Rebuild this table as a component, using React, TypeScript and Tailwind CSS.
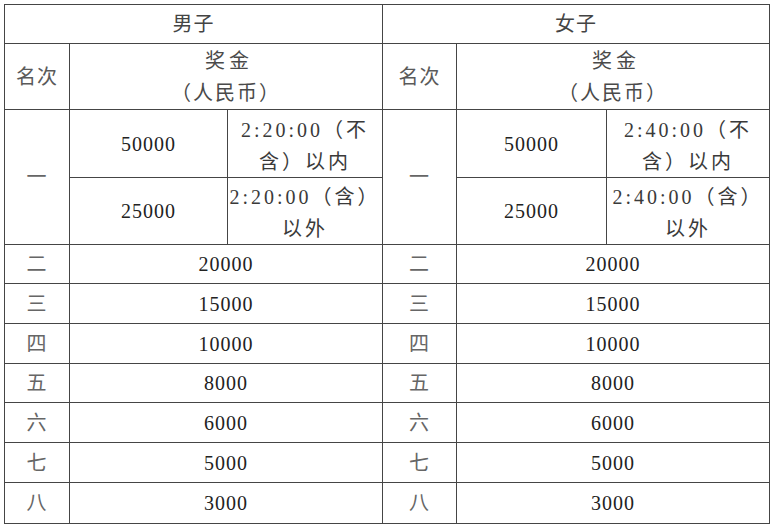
import React from "react";

const F = { fontFamily: '"Liberation Serif", "Noto Sans CJK SC", serif' };

function Cell({ children, className = "" }: { children?: React.ReactNode; className?: string }) {
  return (
    <div className={`bg-white flex items-center justify-center text-center text-[20px] tracking-[1px] leading-[32px] whitespace-nowrap ${className}`}>
      {children}
    </div>
  );
}

const ranks: [string, string][] = [
  ["二", "20000"],
  ["三", "15000"],
  ["四", "10000"],
  ["五", "8000"],
  ["六", "6000"],
  ["七", "5000"],
  ["八", "3000"],
];

function Prize() {
  return (
    <div>
      <div className="tracking-[4px] pl-[6px]">奖金</div>
      <div className="tracking-[2px]">（人民币）</div>
    </div>
  );
}

function Time({ a, b }: { a: string; b: string }) {
  return (
    <div className="tracking-[3px] text-[#3a3a3a]">
      <div>{a}</div>
      <div>{b}</div>
    </div>
  );
}

export default function App() {
  return (
    <div className="w-[776px] h-[528px] bg-white pt-[4px] pl-[4px]" style={F}>
      <div className="w-[766px] bg-[#454545] p-px grid gap-px grid-cols-[64px_157px_154px_73px_149px_162px] grid-rows-[38px_65px_67px_66px_38px_39px_39px_38px_39px_39px_40px]">
        <Cell className="col-span-3 text-[#444]">男子</Cell>
        <Cell className="col-span-3 text-[#444]">女子</Cell>

        <Cell className="text-[#5a5a5a]">名次</Cell>
        <Cell className="col-span-2 text-[#4a4a4a]">
          <Prize />
        </Cell>
        <Cell className="text-[#5a5a5a]">名次</Cell>
        <Cell className="col-span-2 text-[#4a4a4a]">
          <Prize />
        </Cell>

        <Cell className="row-span-2 text-[#666]">一</Cell>
        <Cell className="text-[#222]">50000</Cell>
        <Cell className="pt-[4px]">
          <Time a="2:20:00（不" b="含）以内" />
        </Cell>
        <Cell className="row-span-2 text-[#666]">一</Cell>
        <Cell className="text-[#222]">50000</Cell>
        <Cell className="pt-[4px]">
          <Time a="2:40:00（不" b="含）以内" />
        </Cell>

        <Cell className="text-[#222]">25000</Cell>
        <Cell className="pt-[4px]">
          <Time a="2:20:00（含）" b="以外" />
        </Cell>
        <Cell className="text-[#222]">25000</Cell>
        <Cell className="pt-[4px]">
          <Time a="2:40:00（含）" b="以外" />
        </Cell>

        {ranks.map(([r, v]) => (
          <React.Fragment key={r}>
            <Cell className="text-[#666]">{r}</Cell>
            <Cell className="col-span-2 text-[#222]">{v}</Cell>
            <Cell className="text-[#666]">{r}</Cell>
            <Cell className="col-span-2 text-[#222]">{v}</Cell>
          </React.Fragment>
        ))}
      </div>
    </div>
  );
}
